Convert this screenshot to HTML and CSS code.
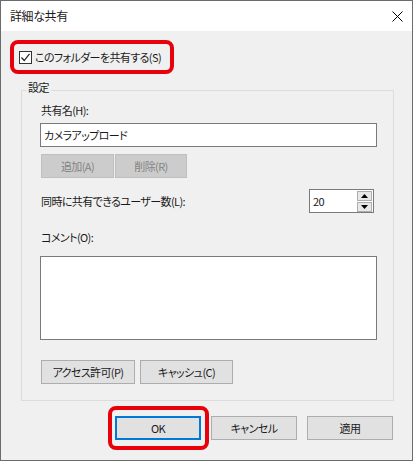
FILE: index.html
```
<!DOCTYPE html>
<html lang="ja">
<head>
    <meta charset="UTF-8">
    <title>詳細な共有</title>
    <link rel="stylesheet" href="styles.css">
</head>
<body>

    <div class="window">
        <div class="titlebar">
            <span class="title">詳細な共有</span>
            <svg class="close" width="11" height="11" viewBox="0 0 11 11">
                <path d="M0.5 0.5 L10.5 10.5 M10.5 0.5 L0.5 10.5" stroke="#000" stroke-width="1" fill="none"/>
            </svg>
        </div>

        <div class="content">
            <!-- highlighted checkbox -->
            <label class="mark share-check">
                <span class="checkbox">
                    <svg width="11" height="11" viewBox="0 0 11 11">
                        <path d="M1.5 5.5 L4.2 8.5 L9.5 1.8" stroke="#222" stroke-width="1.2" fill="none"/>
                    </svg>
                </span>
                <span>このフォルダーを共有する(S)</span>
            </label>

            <fieldset class="group">
                <legend>設定</legend>
                <div class="group-body">
                    <div class="label">共有名(H):</div>
                    <div class="field share-name">カメラアップロード</div>

                    <div class="btn-row top-btns">
                        <button class="btn disabled add-btn">追加(A)</button>
                        <button class="btn disabled del-btn">削除(R)</button>
                    </div>

                    <div class="limit-row">
                        <span>同時に共有できるユーザー数(L):</span>
                        <div class="spin">
                            <span class="spin-value">20</span>
                            <div class="spin-btns">
                                <span class="spin-btn"><svg width="7" height="4" viewBox="0 0 7 4"><path d="M0 4 L3.5 0 L7 4 Z" fill="#000"/></svg></span>
                                <span class="spin-btn"><svg width="7" height="4" viewBox="0 0 7 4"><path d="M0 0 L3.5 4 L7 0 Z" fill="#000"/></svg></span>
                            </div>
                        </div>
                    </div>

                    <div class="label comment-label">コメント(O):</div>
                    <div class="field comment"></div>

                    <div class="btn-row bottom-btns">
                        <button class="btn perm-btn">アクセス許可(P)</button>
                        <button class="btn cache-btn">キャッシュ(C)</button>
                    </div>
                </div>
            </fieldset>

            <div class="footer">
                <div class="mark ok-mark">
                    <button class="btn default">OK</button>
                </div>
                <button class="btn">キャンセル</button>
                <button class="btn">適用</button>
            </div>
        </div>
    </div>

</body>
</html>
```

FILE: styles.css
```
body {
    margin: 0;
    font-family: "Noto Sans CJK JP", "Noto Sans", sans-serif;
    font-size: 11px;
    letter-spacing: -0.6px;
    line-height: 16px;
    color: #1a1a1a;
    font-feature-settings: "palt";
}

.window {
    width: 413px;
    height: 461px;
    box-sizing: border-box;
    border: 1px solid #6b6b6b;
    display: flex;
    flex-direction: column;
    background: #fff;
}

.titlebar {
    height: 30px;
    display: flex;
    align-items: center;
    justify-content: space-between;
    padding: 0 9px 0 9px;
    flex-shrink: 0;
}

.title {
    font-size: 12px;
    letter-spacing: -0.4px;
}

.close {
    margin-top: 1px;
}

.content {
    flex: 1;
    background: #f0f0f0;
    padding: 9px 0 0 9px;
    display: flex;
    flex-direction: column;
}

/* red highlight marks */
.mark {
    border: 4px solid #e8000b;
    border-radius: 8px;
}

.share-check {
    align-self: flex-start;
    height: 26px;
    display: flex;
    align-items: center;
    padding: 0 9px 0 5px;
}

.checkbox {
    width: 11px;
    height: 11px;
    border: 1px solid #333;
    background: #fff;
    display: flex;
    margin-right: 3px;
}

/* group box */
.group {
    margin: 5px 0 0 11px;
    padding: 0;
    width: 373px;
    box-sizing: border-box;
    border: 1px solid #dcdcdc;
    min-width: 0;
}

.group legend {
    margin-left: 4px;
    padding: 0 2px 6px;
    line-height: 16px;
}

.group-body {
    display: flex;
    flex-direction: column;
    align-items: flex-start;
    padding: 1px 16px 16px 18px;
}

.label {
    padding-left: 1px;
}

.field {
    box-sizing: border-box;
    width: 337px;
    border: 1px solid #7a7a7a;
    background: #fff;
}

.share-name {
    height: 24px;
    margin-top: 5px;
    padding: 3px 3px;
}

.btn-row {
    display: flex;
    padding-left: 1px;
}

.btn {
    font: inherit;
    letter-spacing: inherit;
    font-feature-settings: "palt";
    line-height: 16px;
    height: 24px;
    box-sizing: border-box;
    border: 1px solid #adadad;
    background: #e1e1e1;
    color: #1a1a1a;
    padding: 0;
    margin: 0;
}

.btn.disabled {
    background: #cccccc;
    border-color: #bfbfbf;
    color: #838383;
}

.top-btns {
    margin-top: 7px;
    gap: 1px;
}

.add-btn { width: 73px; }
.del-btn { width: 72px; }

.limit-row {
    margin-top: 11px;
    width: 334px;
    display: flex;
    align-items: center;
    justify-content: space-between;
    padding-left: 1px;
    box-sizing: border-box;
}

.spin {
    width: 65px;
    height: 24px;
    box-sizing: border-box;
    border: 1px solid #7a7a7a;
    background: #fff;
    display: flex;
    align-items: center;
    justify-content: space-between;
    padding: 0 0 0 3px;
}

.spin-btns {
    display: flex;
    flex-direction: column;
    gap: 1px;
    padding: 1px 1px;
}

.spin-btn {
    width: 15px;
    height: 10px;
    box-sizing: border-box;
    border: 1px solid #adadad;
    background: #e8e8e8;
    display: flex;
    align-items: center;
    justify-content: center;
}

.comment-label {
    margin-top: 16px;
}

.comment {
    height: 84px;
    margin-top: 11px;
}

.bottom-btns {
    margin-top: 20px;
    gap: 5px;
}

.perm-btn { width: 94px; }
.cache-btn { width: 93px; }

/* dialog buttons */
.footer {
    display: flex;
    justify-content: flex-end;
    align-items: center;
    gap: 10px;
    margin-top: 15px;
    padding-right: 19px;
}

.footer .btn {
    width: 86px;
}

.ok-mark {
    padding: 6px 4px 6px 3px;
    margin: -10px -8px -10px -7px;
    display: flex;
}

.btn.default {
    border: 2px solid #0078d7;
}
```
